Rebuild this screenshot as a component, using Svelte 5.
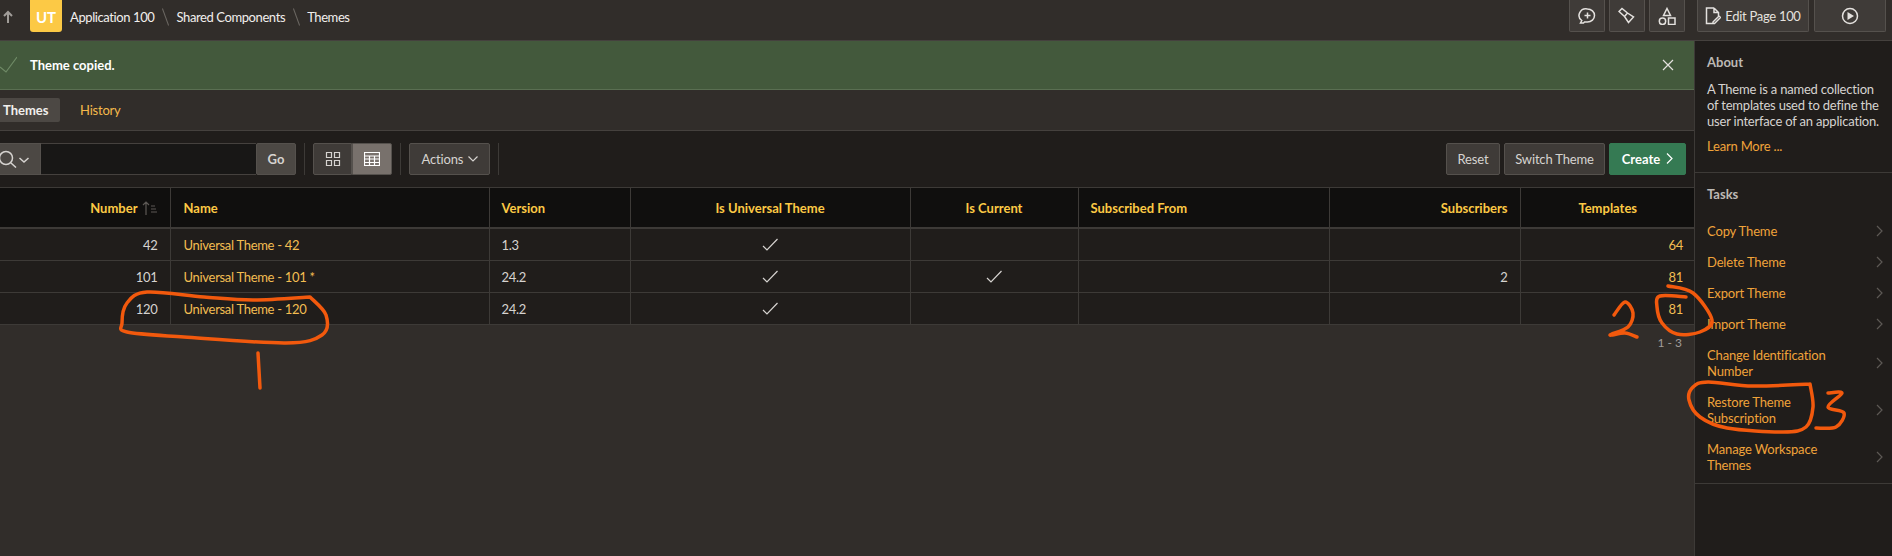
<script>
	const rows = [
		{ number: 42, name: 'Universal Theme - 42', version: '1.3', universal: true, current: false, subscribers: '', templates: 64 },
		{ number: 101, name: 'Universal Theme - 101 *', version: '24.2', universal: true, current: true, subscribers: '2', templates: 81 },
		{ number: 120, name: 'Universal Theme - 120', version: '24.2', universal: true, current: false, subscribers: '', templates: 81 }
	];

	const tasks = [
		'Copy Theme',
		'Delete Theme',
		'Export Theme',
		'Import Theme',
		'Change Identification Number',
		'Restore Theme Subscription',
		'Manage Workspace Themes'
	];

	// hand-drawn annotations on top of the screenshot
	const scribbles = [
		[[310,297],[326,315],[322,335],[286,343],[184,337],[127,332],[122,323],[127,303],[147,292],[204,297],[253,300],[310,297]],
		[[258,353],[260,388]],
		[[1614,315],[1625,302],[1633,313],[1628,327],[1610,335],[1625,333],[1637,337]],
		[[1668,286],[1693,293],[1712,320],[1700,332],[1677,334],[1662,323],[1657,307],[1660,296],[1686,297]],
		[[1810,384],[1813,407],[1806,427],[1783,432],[1727,428],[1700,417],[1689,400],[1693,387],[1708,382],[1753,386],[1810,384]],
		[[1828,393],[1842,393],[1828,407],[1844,413],[1836,427],[1816,428]]
	];

	function smooth(pts) {
		let d = `M${pts[0][0]} ${pts[0][1]}`;
		for (let i = 0; i < pts.length - 1; i++) {
			const p0 = pts[i - 1] || pts[i];
			const p1 = pts[i];
			const p2 = pts[i + 1];
			const p3 = pts[i + 2] || p2;
			const c1x = p1[0] + (p2[0] - p0[0]) / 6;
			const c1y = p1[1] + (p2[1] - p0[1]) / 6;
			const c2x = p2[0] - (p3[0] - p1[0]) / 6;
			const c2y = p2[1] - (p3[1] - p1[1]) / 6;
			d += `C${c1x} ${c1y} ${c2x} ${c2y} ${p2[0]} ${p2[1]}`;
		}
		return d;
	}
</script>

{#snippet check()}
	<svg class="check" width="16" height="16" viewBox="0 0 16 16"><path d="M1 9l4 4L15.500 2" /></svg>
{/snippet}

<div class="page">
	<header class="topbar">
		<div class="crumbs">
			<svg class="up" width="12" height="14" viewBox="0 0 12 14"><path d="M6 13V2M2 6l4-4 4 4" /></svg>
			<span class="badge">UT</span>
			<span class="crumb">Application 100</span>
			<span class="slash"></span>
			<span class="crumb">Shared Components</span>
			<span class="slash"></span>
			<span class="crumb">Themes</span>
		</div>
		<div class="top-actions">
			<button class="tbtn icon" aria-label="Feedback">
				<svg width="18" height="18" viewBox="0 0 18 18"><path d="M9.500 2a7 6.500 0 0 1 0 13H6.500l-1 1H2.500l1.300-2.500A7 6.500 0 0 1 9.500 2zM9.500 5.500v6M6.500 8.500h6" /></svg>
			</button>
			<button class="tbtn icon" aria-label="Search">
				<svg width="18" height="18" viewBox="0 0 18 18"><path d="M1 4.500L4 1.500l5.500 4.500 6 4-5 5.500-4-6zM6.500 9.500L9.500 6" /></svg>
			</button>
			<button class="tbtn icon" aria-label="Shared Components">
				<svg width="18" height="18" viewBox="0 0 18 18"><path d="M9 1.500L12.500 8.500h-7zM10.500 11h6.500v6.500h-6.500z" /><circle cx="4.500" cy="14.300" r="3.200" /></svg>
			</button>
			<button class="tbtn edit">
				<svg width="16" height="18" viewBox="0 0 16 18"><path d="M9 1H1.500v15.500h6M9 1l4.500 4.500V9M9 1v4.500h4.500M8 15l6-6 1.500 1.500-6 6H8z" /></svg>
				Edit Page 100
			</button>
			<button class="tbtn run" aria-label="Run">
				<svg width="18" height="18" viewBox="0 0 18 18"><circle cx="9" cy="9" r="7.500" /><path class="solid" d="M6.500 5L13 9l-6.500 4z" /></svg>
			</button>
		</div>
	</header>

	<div class="body">
		<main class="main">
			<div class="alert">
				<svg class="alert-check" width="17" height="20" viewBox="0 0 17 20"><path d="M0 12l6 5L17 2" /></svg>
				<span>Theme copied.</span>
				<svg class="close" width="12" height="12" viewBox="0 0 12 12"><path d="M1 1l10 10M11 1L1 11" /></svg>
			</div>

			<nav class="tabs">
				<span class="tab active">Themes</span>
				<span class="tab">History</span>
			</nav>

			<div class="toolbar">
				<div class="search">
					<button class="btn search-btn" aria-label="Search columns">
						<svg width="30" height="18" viewBox="0 0 30 18"><circle cx="6" cy="8" r="6.500" /><path d="M11 13l5 4.500M19.500 8l4.500 4 4.500-4" /></svg>
					</button>
					<div class="search-input"></div>
					<button class="btn go">Go</button>
				</div>
				<span class="sep"></span>
				<div class="toggle">
					<button class="btn view" aria-label="Icon view">
						<svg width="16" height="16" viewBox="0 0 16 16"><path d="M1.500 1.500h5v5h-5zM9.500 1.500h5v5h-5zM1.500 9.500h5v5h-5zM9.500 9.500h5v5h-5z" /></svg>
					</button>
					<button class="btn view on" aria-label="Report view">
						<svg width="16" height="14" viewBox="0 0 16 14"><path d="M.5.500h15v13H.5zM.5 4h15M.5 7h15M.5 10.500h15M5.500 4v9.500M10.500 4v9.500" /></svg>
					</button>
				</div>
				<span class="sep"></span>
				<button class="btn actions">
					Actions
					<svg width="10" height="6" viewBox="0 0 10 6"><path d="M.5.500L5 5 9.500.500" /></svg>
				</button>
				<span class="sep"></span>
				<div class="spacer"></div>
				<button class="btn plain reset">Reset</button>
				<button class="btn plain switch">Switch Theme</button>
				<button class="btn create">
					Create
					<svg width="7" height="11" viewBox="0 0 7 11"><path d="M1 .500l5 5-5 5" /></svg>
				</button>
			</div>

			<table>
				<thead>
					<tr>
						<th class="num c-number">
							<span class="sort-wrap">
								Number
								<svg class="sort" width="16" height="16" viewBox="0 0 16 16"><path d="M4 15V2M1 5l3-3 3 3M9 6h4M9 9h5M9 12h6" /></svg>
							</span>
						</th>
						<th class="c-name">Name</th>
						<th class="c-version">Version</th>
						<th class="mid c-uni">Is Universal Theme</th>
						<th class="mid c-cur">Is Current</th>
						<th class="c-from">Subscribed From</th>
						<th class="num c-subs">Subscribers</th>
						<th class="mid c-tpl">Templates</th>
					</tr>
				</thead>
				<tbody>
					{#each rows as row}
						<tr>
							<td class="num">{row.number}</td>
							<td class="link">{row.name}</td>
							<td>{row.version}</td>
							<td class="mid">{#if row.universal}{@render check()}{/if}</td>
							<td class="mid">{#if row.current}{@render check()}{/if}</td>
							<td></td>
							<td class="num">{row.subscribers}</td>
							<td class="num link">{row.templates}</td>
						</tr>
					{/each}
				</tbody>
			</table>
			<div class="pagination">1 - 3</div>
		</main>

		<aside class="side">
			<section class="about">
				<h2>About</h2>
				<p>A Theme is a named collection of templates used to define the user interface of an application.</p>
				<span class="learn">Learn More ...</span>
			</section>
			<section class="tasks">
				<h2>Tasks</h2>
				<ul>
					{#each tasks as task}
						<li>
							<span>{task}</span>
							<svg width="7" height="12" viewBox="0 0 7 12"><path d="M1 1l5 5-5 5" /></svg>
						</li>
					{/each}
				</ul>
			</section>
		</aside>
	</div>

	<svg class="annotations" width="1892" height="556" viewBox="0 0 1892 556">
		{#each scribbles as pts}
			<path d={smooth(pts)} />
		{/each}
	</svg>
</div>

<style>
	:global(body) {
		margin: 0;
		background: #312d2a;
	}

	.page {
		position: relative;
		width: 1892px;
		height: 556px;
		overflow: hidden;
		display: flex;
		flex-direction: column;
		font-family: Lato, 'Noto Sans', sans-serif;
		font-size: 13px;
		color: #d6d3d0;
	}

	svg path,
	svg circle {
		fill: none;
		stroke: currentColor;
		stroke-width: 1.2;
	}

	svg path.solid {
		fill: currentColor;
		stroke: none;
	}

	button {
		font: inherit;
		margin: 0;
		cursor: pointer;
	}

	.topbar {
		height: 40px;
		flex: none;
		display: flex;
		justify-content: space-between;
		background: #312d2a;
		border-bottom: 1px solid #45413e;
	}

	.crumbs {
		display: flex;
		align-items: flex-start;
		color: #f1efed;
		font-size: 13px;
		letter-spacing: -0.4px;
	}

	.up {
		margin: 10px 0 0 2px;
		color: #a09c98;
	}

	.up path {
		stroke-width: 2;
	}

	.badge {
		width: 32px;
		height: 32px;
		margin: 0 8px 0 16px;
		border-radius: 0 0 3px 3px;
		background: #fcc945;
		color: #fff;
		font-weight: 700;
		font-size: 15px;
		letter-spacing: 0;
		line-height: 34px;
		text-align: center;
	}

	.crumb {
		line-height: 34px;
	}

	.slash {
		width: 1px;
		height: 18px;
		margin: 8px 10.500px 0;
		background: #6b6762;
		transform: rotate(-20deg);
	}

	.top-actions {
		display: flex;
		gap: 4px;
		padding-right: 6px;
	}

	.tbtn {
		height: 32px;
		box-sizing: border-box;
		padding: 0;
		display: flex;
		align-items: center;
		justify-content: center;
		gap: 4px;
		background: #3f3b38;
		border: 1px solid #55514d;
		border-top: none;
		border-radius: 0 0 2px 2px;
		color: #e4e1de;
		font-size: 13px;
		letter-spacing: -0.3px;
	}

	.tbtn svg path,
	.tbtn svg circle {
		stroke-width: 1.5;
	}

	.tbtn svg path.solid {
		stroke: none;
	}

	.tbtn.icon {
		width: 36px;
	}

	.tbtn.edit {
		width: 112px;
		margin-left: 8px;
	}

	.tbtn.run {
		width: 72px;
		margin-left: 1px;
	}

	.body {
		flex: 1;
		display: flex;
		min-height: 0;
	}

	.main {
		width: 1694px;
		flex: none;
	}

	.alert {
		position: relative;
		height: 48px;
		display: flex;
		align-items: center;
		padding-left: 30px;
		background: #43593c;
		border-bottom: 1px solid #5a6f52;
		color: #fff;
		font-weight: 700;
		font-size: 13px;
	}

	.alert-check {
		position: absolute;
		left: 0;
		top: 14px;
		color: #6f8a66;
	}

	.close {
		position: absolute;
		right: 20px;
		top: 18px;
		color: #e4e1de;
	}

	.tabs {
		height: 41px;
		box-sizing: border-box;
		display: flex;
		align-items: center;
		gap: 20px;
		border-bottom: 1px solid #45413e;
	}

	.tab {
		color: #f5b94b;
		font-size: 13px;
		letter-spacing: -0.2px;
	}

	.tab.active {
		width: 60px;
		height: 24px;
		box-sizing: border-box;
		padding-left: 3px;
		line-height: 24px;
		background: #4c4844;
		border-radius: 0 2px 2px 0;
		color: #f1efed;
		font-weight: 700;
		letter-spacing: 0;
	}

	.toolbar {
		height: 57px;
		box-sizing: border-box;
		display: flex;
		align-items: center;
		gap: 8px;
		padding-right: 8px;
		background: #201d1b;
		border-bottom: 1px solid #3d3a37;
	}

	.btn {
		height: 32px;
		box-sizing: border-box;
		padding: 0;
		border: 1px solid #55514d;
		border-radius: 2px;
		background: #3f3b38;
		color: #d6d3d0;
		font-size: 13px;
		letter-spacing: -0.15px;
	}

	.search {
		display: flex;
	}

	.search-btn {
		width: 41px;
		border-left: none;
		border-radius: 0;
		background: #4c4844;
		display: flex;
		align-items: center;
		justify-content: flex-start;
		overflow: hidden;
	}

	.search-btn svg path,
	.search-btn svg circle {
		stroke-width: 1.5;
	}

	.search-input {
		width: 215px;
		height: 32px;
		box-sizing: border-box;
		background: #181716;
		border: 1px solid #45413e;
		border-width: 1px 0;
	}

	.go {
		width: 40px;
		background: #4c4844;
		font-weight: 700;
		letter-spacing: 0;
	}

	.sep {
		width: 1px;
		height: 32px;
		background: #3d3a37;
	}

	.toggle {
		display: flex;
	}

	.view {
		width: 39px;
		display: flex;
		align-items: center;
		justify-content: center;
		border-radius: 2px 0 0 2px;
	}

	.view.on {
		width: 40px;
		background: #78716c;
		border-radius: 0 2px 2px 0;
		color: #fff;
	}

	.actions {
		width: 81px;
	}

	.actions svg {
		margin-left: 1px;
		vertical-align: 2px;
	}

	.spacer {
		flex: 1;
	}

	.plain.reset {
		width: 54px;
		margin-right: -4px;
	}

	.plain.switch {
		width: 101px;
		margin-right: -4px;
	}

	.create {
		width: 77px;
		background: #357a53;
		border-color: #357a53;
		color: #fff;
		font-weight: 700;
		letter-spacing: 0;
	}

	.create svg {
		margin-left: 3px;
	}

	table {
		width: 1695px;
		border-collapse: collapse;
		table-layout: fixed;
	}

	th {
		height: 40px;
		padding: 0 12px;
		box-sizing: border-box;
		background: #100f0e;
		color: #fcc945;
		font-size: 13px;
		font-weight: 700;
		text-align: left;
		border: 1px solid #3d3a37;
		border-width: 0 1px 2px 0;
	}

	td {
		height: 32px;
		padding: 2px 12px 0;
		box-sizing: border-box;
		background: #201d1b;
		font-size: 13px;
		letter-spacing: -0.3px;
		border: 1px solid #3d3a37;
		border-width: 0 1px 1px 0;
	}

	th:nth-child(2),
	td:nth-child(2) {
		padding-left: 13px;
	}

	th:last-child,
	td:last-child {
		border-right: none;
	}

	.num {
		text-align: right;
	}

	.mid {
		text-align: center;
	}

	.link {
		color: #f3bd52;
	}

	.c-number { width: 170px; }
	.c-name { width: 319px; }
	.c-version { width: 141px; }
	.c-uni { width: 280px; }
	.c-cur { width: 168px; }
	.c-from { width: 251px; }
	.c-subs { width: 191px; }
	.c-tpl { width: 175px; }

	.sort-wrap {
		display: inline-flex;
		align-items: center;
		gap: 4px;
	}

	.sort {
		color: #5d5955;
	}

	.check {
		display: block;
		margin: 0 auto;
		color: #d6d3d0;
	}

	.pagination {
		height: 34px;
		padding-right: 12px;
		font-size: 12px;
		line-height: 36px;
		text-align: right;
		color: #a09c98;
	}

	.side {
		flex: 1;
		box-sizing: border-box;
		background: #201d1b;
		border-left: 1px solid #3d3a37;
	}

	h2 {
		margin: 0;
		font-size: 13px;
		font-weight: 700;
		color: #bdb9b5;
	}

	.about {
		height: 132px;
		box-sizing: border-box;
		padding: 13px 12px 0;
		border-bottom: 1px solid #3d3a37;
	}

	.about p {
		margin: 11px 0 0;
		width: 180px;
		font-size: 13px;
		line-height: 16px;
		letter-spacing: -0.2px;
	}

	.learn {
		display: block;
		margin-top: 9px;
		color: #f0a33a;
		letter-spacing: -0.2px;
	}

	.tasks {
		padding-top: 13px;
		height: 311px;
		box-sizing: border-box;
		border-bottom: 1px solid #3d3a37;
	}

	.tasks h2 {
		padding-left: 12px;
	}

	ul {
		list-style: none;
		margin: 14px 0 0;
		padding: 0;
	}

	li {
		display: flex;
		align-items: center;
		justify-content: space-between;
		padding: 7px 16px 8px 12px;
		line-height: 16px;
		color: #f0a33a;
		letter-spacing: -0.15px;
	}

	li span {
		max-width: 140px;
	}

	li svg {
		color: #5d5955;
	}

	.annotations {
		position: absolute;
		left: 0;
		top: 0;
		pointer-events: none;
	}

	.annotations path {
		stroke: #f2590d;
		stroke-width: 3.5;
		stroke-linecap: round;
		stroke-linejoin: round;
	}
</style>
